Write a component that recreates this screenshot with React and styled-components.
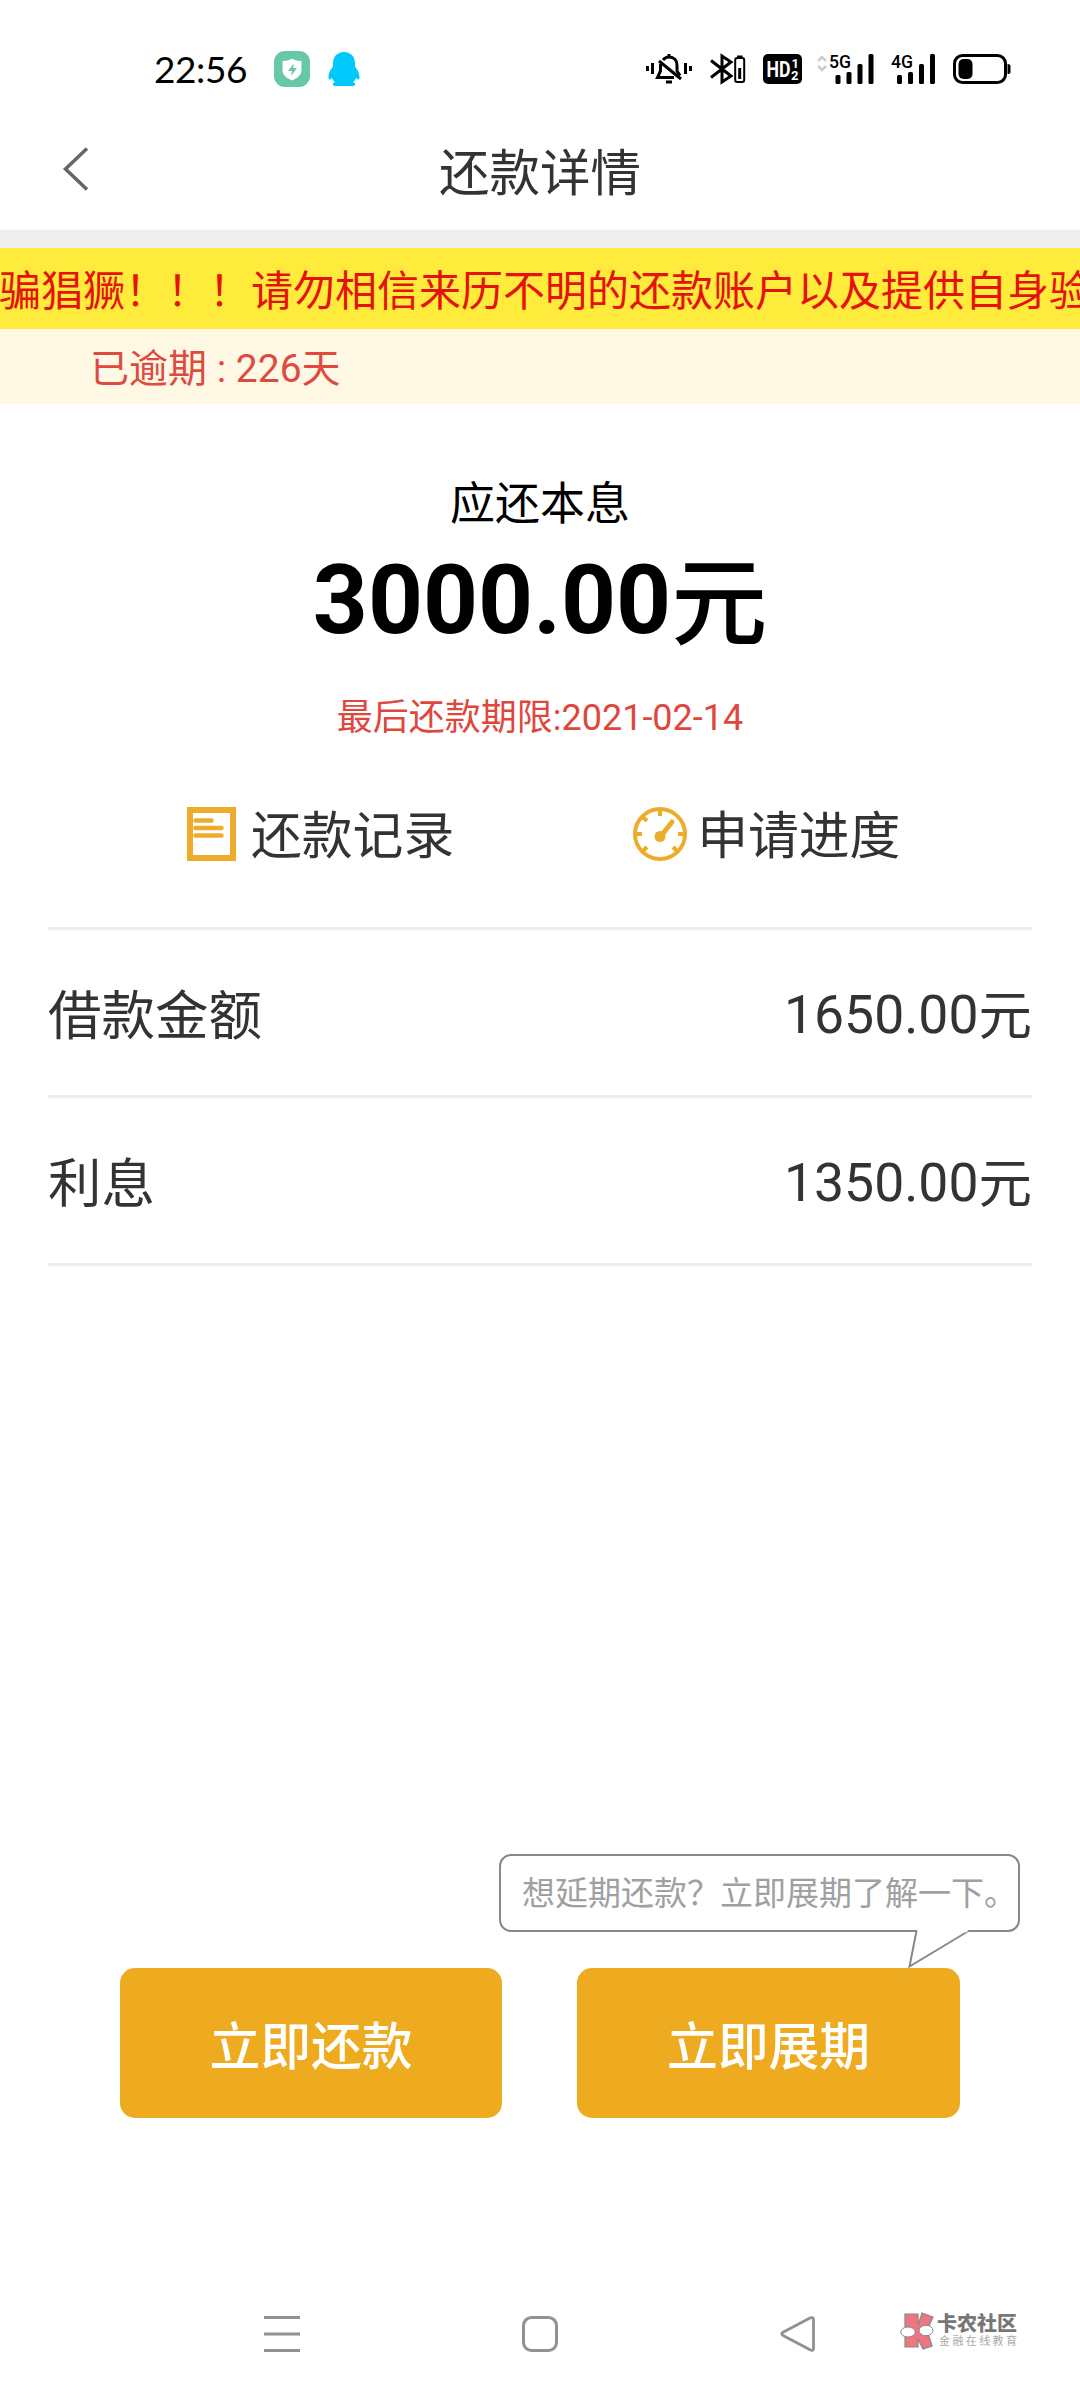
import React from 'react';
import styled, { createGlobalStyle } from 'styled-components';

const details = [
  { label: '借款金额', value: '1650.00' },
  { label: '利息', value: '1350.00' },
];

const SignalBars = () => (
  <g>
    <rect x="6" y="23" width="5" height="9" rx="1.5" />
    <rect x="17" y="20" width="5" height="12" rx="1.5" />
    <rect x="28" y="12" width="5" height="20" rx="1.5" />
    <rect x="39" y="2" width="5" height="30" rx="1.5" />
  </g>
);

const StatusIcons = () => (
  <StatusRight>
    {/* 静音 */}
    <svg width="46" height="34" viewBox="0 0 46 34" fill="none" stroke="#000" strokeWidth="3">
      <path d="M1.500 14v5M6.500 11v11M39.500 11v11M44.500 14v5" />
      <path d="M17 8C19 5.500 21 5 23 5c5 0 8 3.500 8 8v6l3 4.500M14.500 12v7l-3 6.500H28" />
      <path d="M13 9l22 18" />
      <path d="M23 2v3M20 30h6" />
    </svg>
    {/* 蓝牙 */}
    <svg width="35" height="34" viewBox="0 0 35 34" fill="none" stroke="#000" strokeWidth="3">
      <path d="M1 8.500l20 15.500-9 6V4l9 6L1 25.500" />
      <rect x="25.200" y="6" width="9" height="24" rx="2" strokeWidth="2" />
      <path d="M27 4.500h5.500" strokeWidth="2" />
      <path d="M29.700 16v11" />
    </svg>
    <svg width="39" height="34" viewBox="0 0 39 34">
      <rect x="0" y="2" width="39" height="30" rx="5" />
      <HdText x="3.500" y="25" fontSize="21.500" textLength="24" lengthAdjust="spacingAndGlyphs">HD</HdText>
      <HdText x="28.500" y="15.500" fontSize="13">1</HdText>
      <HdText x="28" y="27.500" fontSize="13">2</HdText>
    </svg>
    <FirstSignal width="56" height="34" viewBox="0 0 56 34">
      <path d="M1 9l4-4 4 4M1 14l4 4 4-4" fill="none" stroke="#ccc" strokeWidth="2.500" />
      <NetText x="12" y="16" textLength="22" lengthAdjust="spacingAndGlyphs">5G</NetText>
      <g transform="translate(12.500 0)"><SignalBars /></g>
    </FirstSignal>
    <svg width="44" height="34" viewBox="0 0 44 34">
      <NetText x="0" y="16" textLength="22" lengthAdjust="spacingAndGlyphs">4G</NetText>
      <SignalBars />
    </svg>
    <svg width="58" height="34" viewBox="0 0 58 34">
      <rect x="1.500" y="3.500" width="51" height="27" rx="8" fill="none" stroke="#000" strokeWidth="3" />
      <rect x="5.500" y="7" width="14" height="20" rx="5" />
      <path d="M54.500 12q3 0 3 2v6q0 2-3 2z" />
    </svg>
  </StatusRight>
);

const App = () => {
  return (
    <Page>
      <GlobalStyle />
      <StatusBar>
        <Time>22:56</Time>
        <svg width="36" height="36" viewBox="0 0 36 36">
          <rect width="36" height="36" rx="11" fill="#66c8a6" />
          <path d="M18 7.500c3 1.800 6 2.500 9.500 2.500v9c0 5-4 8-9.500 10.500C12.500 27 8.500 24 8.500 19v-9c3.500 0 6.500-.700 9.500-2.500z" fill="#fff" />
          <path d="M20 12l-6 8h4l-1 5 6-8h-4z" fill="#66c8a6" />
        </svg>
        <Penguin width="32" height="36" viewBox="0 0 32 36">
          <path d="M16 1C9 1 5 6 5 12.500v3C3 18 .500 22 .500 26c0 3 1.500 3.500 3.500.500.500 2 1.500 3.500 3 4.500-3 1-3 4 0 4h18c3 0 3-3 0-4 1.500-1 2.500-2.500 3-4.500 2 3 3.500 2.500 3.500-.500 0-4-2.500-8-4.500-10.500v-3C27 6 23 1 16 1z" fill="#00c8fa" />
        </Penguin>
        <StatusIcons />
      </StatusBar>

      <Header>
        <BackButton aria-label="返回">
          <svg width="26" height="44" viewBox="0 0 26 44" fill="none" stroke="#666" strokeWidth="3.500">
            <path d="M24 1.500L2.500 22 24 42.500" />
          </svg>
        </BackButton>
        <Title>还款详情</Title>
      </Header>
      <Band />
      <Marquee>骗猖獗！！！请勿相信来历不明的还款账户以及提供自身验</Marquee>
      <Overdue>已逾期 : 226天</Overdue>

      <Summary>
        <SummaryLabel>应还本息</SummaryLabel>
        <Amount>3000.00<Unit $drop={4}>元</Unit></Amount>
        <DueDate>最后还款期限:2021-02-14</DueDate>
      </Summary>

      <Links>
        <LinkItem $gap={15}>
          <svg width="49" height="54" viewBox="0 0 49 54" fill="none" stroke="#edac2b">
            <rect x="3" y="3" width="43" height="48" strokeWidth="6" />
            <path d="M8.500 13.500h16M8.500 21h26M8.500 28.500h26" strokeWidth="4.500" strokeLinecap="round" />
          </svg>
          <span>还款记录</span>
        </LinkItem>
        <LinkItem $gap={10}>
          <svg width="54" height="54" viewBox="0 0 54 54" fill="none" stroke="#edac2b">
            <circle cx="27" cy="27" r="25" strokeWidth="4" />
            <path
              d="M27 3v6M3 27h6M45 27h6M10 10l4 4M10 44l4-4M44 44l-4-4"
              strokeWidth="4"
            />
            <path d="M28 29L39 15" strokeWidth="5" strokeLinecap="round" />
            <circle cx="27" cy="29.500" r="5.500" fill="#edac2b" stroke="none" />
          </svg>
          <span>申请进度</span>
        </LinkItem>
      </Links>

      <DetailList>
        {details.map((item) => (
          <DetailRow key={item.label}>
            <DetailLabel>{item.label}</DetailLabel>
            <span>{item.value}<Unit $drop={2}>元</Unit></span>
          </DetailRow>
        ))}
      </DetailList>

      <Footer>
        <Bubble>
          想延期还款？立即展期了解一下。
          <BubbleTail width="64" height="40" viewBox="0 0 64 40">
            <path d="M9.500 1L2.500 36.500 61.500 1" fill="#fff" stroke="#888" strokeWidth="2" />
            <path d="M10.500 1h50" stroke="#fff" strokeWidth="2.500" />
          </BubbleTail>
        </Bubble>
        <Buttons>
          <Button>立即还款</Button>
          <Button>立即展期</Button>
        </Buttons>
      </Footer>

      <NavBar>
        <svg width="36" height="36" viewBox="0 0 36 36" stroke="#919191" strokeWidth="3">
          <path d="M0 1.500h36M0 18h36M0 34.500h36" />
        </svg>
        <svg width="36" height="36" viewBox="0 0 36 36" fill="none" stroke="#919191" strokeWidth="3">
          <rect x="1.500" y="1.500" width="33" height="33" rx="8" />
        </svg>
        <svg width="36" height="36" viewBox="0 0 36 36" fill="none" stroke="#919191" strokeWidth="2.800" strokeLinejoin="round">
          <path d="M30.500 1.800L3 16.200q-2.500 1.600 0 3.200L30.500 34q3 1 3-1.500v-29q0-2.700-3-1.700z" />
        </svg>
        <Watermark>
          <svg width="34" height="38" viewBox="0 0 34 38">
            <path d="M5 2h13v11l4-12 11 4-6 13 5 16-9 3-5-10v8H5z" fill="#ef7680" stroke="#888" strokeWidth="1.200" />
            <ellipse cx="8" cy="20" rx="7.300" ry="5" fill="#fff" stroke="#888" />
            <ellipse cx="26" cy="18.500" rx="7" ry="5.200" fill="#fff" stroke="#888" />
          </svg>
          <div>
            <BrandName>卡农社区</BrandName>
            <BrandSlogan>金融在线教育</BrandSlogan>
          </div>
        </Watermark>
      </NavBar>
    </Page>
  );
};

export default App;

const GlobalStyle = createGlobalStyle`
  * {
    box-sizing: border-box;
  }

  body {
    margin: 0;
    background: #fff;
    font-family: Roboto, 'Noto Sans CJK SC', sans-serif;
  }

  svg {
    display: block;
    flex-shrink: 0;
    overflow: visible;
  }
`;

const Page = styled.div`
  display: flex;
  flex-direction: column;
  width: 1080px;
  height: 2400px;
  overflow: hidden;
  background: #fff;
  color: #333;
`;

const StatusBar = styled.div`
  display: flex;
  align-items: center;
  height: 114px;
  padding: 24px 69px 0 154px;
  color: #000;
`;

const Time = styled.span`
  width: 120px;
  padding-bottom: 1px;
  font-family: Lato, Roboto, sans-serif;
  font-size: 37px;
  letter-spacing: -0.4px;
  line-height: 40px;
`;

const Penguin = styled.svg`
  margin-left: 18px;
`;

const StatusRight = styled.div`
  display: flex;
  align-items: center;
  gap: 18px;
  margin-left: auto;
`;

const FirstSignal = styled.svg`
  margin-left: -3px;
`;

const HdText = styled.text`
  fill: #fff;
  font-family: Roboto, sans-serif;
  font-weight: 700;
`;

const NetText = styled.text`
  font-family: Roboto, sans-serif;
  font-size: 19px;
  font-weight: 500;
`;

const Header = styled.header`
  display: grid;
  grid-template-columns: 240px 1fr 240px;
  align-items: center;
  height: 116px;
`;

const BackButton = styled.button`
  padding: 0 0 6px 63px;
  border: none;
  background: none;
`;

const Title = styled.h1`
  margin: 0;
  padding-top: 4px;
  font-size: 50.5px;
  font-weight: 400;
  line-height: 60px;
  text-align: center;
`;

const Band = styled.div`
  height: 18px;
  background: #eee;
`;

const Marquee = styled.div`
  height: 81px;
  margin-left: -1px;
  overflow: hidden;
  background: #ffeb3b;
  color: #e6120a;
  font-size: 42px;
  line-height: 87px;
  white-space: nowrap;
`;

const Overdue = styled.div`
  height: 75px;
  padding-left: 90px;
  background: #fff8e5;
  color: #df4a3f;
  font-size: 39px;
  line-height: 81px;
`;

const Summary = styled.section`
  display: flex;
  flex-direction: column;
  align-items: center;
  padding-top: 71px;
  color: #000;
`;

const SummaryLabel = styled.div`
  font-size: 45px;
  line-height: 60px;
`;

const Amount = styled.div`
  margin-top: 9px;
  height: 112px;
  font-size: 96px;
  font-weight: 700;
  line-height: 112px;
`;

const Unit = styled.span`
  font-weight: ${(props) => (props.$drop > 2 ? 500 : 400)};
  line-height: 1;
  vertical-align: -${(props) => props.$drop}px;
`;

const DueDate = styled.div`
  margin-top: 37px;
  color: #e0473c;
  font-size: 36px;
  line-height: 50px;
`;

const Links = styled.div`
  display: flex;
  gap: 179px;
  padding: 59px 0 0 187px;
  height: 184px;
`;

const LinkItem = styled.div`
  display: flex;
  align-items: center;
  gap: ${(props) => props.$gap}px;
  height: 64px;
  font-size: 50.8px;
  line-height: 64px;

  span {
    padding-top: 6px;
  }
`;

const DetailList = styled.div`
  margin: 0 48px;
  border-top: 3px solid #eee;
`;

const DetailRow = styled.div`
  display: flex;
  justify-content: space-between;
  height: 168px;
  border-bottom: 3px solid #eee;
  font-size: 53.5px;
  line-height: 170px;
`;

const DetailLabel = styled.span`
  line-height: 174px;
`;

const Footer = styled.div`
  margin-top: auto;
  padding: 0 120px;
`;

const Bubble = styled.div`
  position: relative;
  width: 521px;
  height: 78px;
  margin: 0 0 36px 379px;
  padding-left: 21px;
  border: 2px solid #888;
  border-radius: 12px;
  color: #a0a0a0;
  font-size: 33px;
  line-height: 76px;
  white-space: nowrap;
`;

const BubbleTail = styled.svg`
  position: absolute;
  top: 74px;
  left: 406px;
`;

const Buttons = styled.div`
  display: grid;
  grid-template-columns: 382px 383px;
  gap: 75px;
`;

const Button = styled.button`
  height: 150px;
  padding: 0;
  border: none;
  border-radius: 15px;
  background: #efab1f;
  color: #fff;
  font-family: inherit;
  font-size: 50.8px;
  font-weight: 500;
`;

const NavBar = styled.nav`
  display: flex;
  align-items: center;
  gap: 222px;
  height: 132px;
  margin-top: 150px;
  padding: 0 0 0 264px;
`;

const Watermark = styled.div`
  display: flex;
  align-items: center;
  gap: 3px;
  margin: -7px 0 0 -138px;
`;

const BrandName = styled.div`
  padding-top: 1px;
  color: #777;
  font-size: 20px;
  font-weight: 900;
  line-height: 22px;
`;

const BrandSlogan = styled.div`
  color: #aaa;
  font-size: 11px;
  letter-spacing: 2.4px;
  line-height: 14px;
  padding-left: 2px;
`;
